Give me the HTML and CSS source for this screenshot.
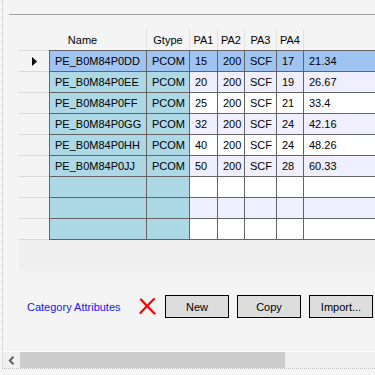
FILE: index.html
```html
<!DOCTYPE html>
<html lang="en">
<head>
    <meta charset="UTF-8">
    <meta name="viewport" content="width=device-width, initial-scale=1.0">
    <title>Category Attributes</title>
    <link rel="stylesheet" href="styles.css">
</head>
<body>
    <div class="frame">
        <div class="rule"></div>

        <div class="grid">
            <div class="grid-row grid-head">
                <div class="hcell hname">Name</div>
                <div class="hcell">Gtype</div>
                <div class="hcell">PA1</div>
                <div class="hcell">PA2</div>
                <div class="hcell">PA3</div>
                <div class="hcell">PA4</div>
                <div class="hcell hlast"></div>
            </div>

            <div class="grid-row first selected">
                <div class="rowhead">
                    <svg width="5" height="9" viewBox="0 0 5 9"><polygon points="0,0 5,4.5 0,9" fill="#000"/></svg>
                </div>
                <div class="cell key name">PE_B0M84P0DD</div>
                <div class="cell key">PCOM</div>
                <div class="cell">15</div>
                <div class="cell">200</div>
                <div class="cell">SCF</div>
                <div class="cell">17</div>
                <div class="cell">21.34</div>
            </div>
            <div class="grid-row alt">
                <div class="rowhead"></div>
                <div class="cell key name">PE_B0M84P0EE</div>
                <div class="cell key">PCOM</div>
                <div class="cell">20</div>
                <div class="cell">200</div>
                <div class="cell">SCF</div>
                <div class="cell">19</div>
                <div class="cell">26.67</div>
            </div>
            <div class="grid-row">
                <div class="rowhead"></div>
                <div class="cell key name">PE_B0M84P0FF</div>
                <div class="cell key">PCOM</div>
                <div class="cell">25</div>
                <div class="cell">200</div>
                <div class="cell">SCF</div>
                <div class="cell">21</div>
                <div class="cell">33.4</div>
            </div>
            <div class="grid-row alt">
                <div class="rowhead"></div>
                <div class="cell key name">PE_B0M84P0GG</div>
                <div class="cell key">PCOM</div>
                <div class="cell">32</div>
                <div class="cell">200</div>
                <div class="cell">SCF</div>
                <div class="cell">24</div>
                <div class="cell">42.16</div>
            </div>
            <div class="grid-row">
                <div class="rowhead"></div>
                <div class="cell key name">PE_B0M84P0HH</div>
                <div class="cell key">PCOM</div>
                <div class="cell">40</div>
                <div class="cell">200</div>
                <div class="cell">SCF</div>
                <div class="cell">24</div>
                <div class="cell">48.26</div>
            </div>
            <div class="grid-row alt">
                <div class="rowhead"></div>
                <div class="cell key name">PE_B0M84P0JJ</div>
                <div class="cell key">PCOM</div>
                <div class="cell">50</div>
                <div class="cell">200</div>
                <div class="cell">SCF</div>
                <div class="cell">28</div>
                <div class="cell">60.33</div>
            </div>
            <div class="grid-row">
                <div class="rowhead"></div>
                <div class="cell key name"></div>
                <div class="cell key"></div>
                <div class="cell"></div>
                <div class="cell"></div>
                <div class="cell"></div>
                <div class="cell"></div>
                <div class="cell"></div>
            </div>
            <div class="grid-row alt">
                <div class="rowhead"></div>
                <div class="cell key name"></div>
                <div class="cell key"></div>
                <div class="cell"></div>
                <div class="cell"></div>
                <div class="cell"></div>
                <div class="cell"></div>
                <div class="cell"></div>
            </div>
            <div class="grid-row">
                <div class="rowhead"></div>
                <div class="cell key name"></div>
                <div class="cell key"></div>
                <div class="cell"></div>
                <div class="cell"></div>
                <div class="cell"></div>
                <div class="cell"></div>
                <div class="cell"></div>
            </div>
        </div>

        <div class="actions">
            <a class="cat-link" href="#">Category Attributes</a>
            <svg class="del-icon" width="17" height="17" viewBox="0 0 17 17">
                <path d="M2 1.5 C6 6, 11 11, 15.5 15.5" stroke="#ff0000" stroke-width="2.2" fill="none" stroke-linecap="round"/>
                <path d="M15 1 C11 5, 6 10, 1.5 15" stroke="#ff0000" stroke-width="2.2" fill="none" stroke-linecap="round"/>
            </svg>
            <button type="button" class="btn">New</button>
            <button type="button" class="btn">Copy</button>
            <button type="button" class="btn">Import...</button>
        </div>

        <div class="hscroll">
            <div class="scroll-arrow">
                <svg width="7" height="9" viewBox="0 0 7 9"><path d="M5.5 0.8 L1.8 4.5 L5.5 8.2" stroke="#606060" stroke-width="2" fill="none"/></svg>
            </div>
            <div class="scroll-thumb"></div>
            <div class="scroll-track"></div>
        </div>
    </div>
</body>
</html>
```

FILE: styles.css
```css
html, body {
    margin: 0;
    overflow: hidden;
}
body {
    background: #f4f4f4;
    font-family: "Liberation Sans", Arial, sans-serif;
    font-size: 11px;
    color: #000;
}
.frame {
    width: 372px;
    height: 354px;
    margin-left: 2px;
    padding-top: 14px;
    border-left: 1px dotted #c4c4c4;
    border-bottom: 1px dotted #c4c4c4;
    overflow: hidden;
}
.rule {
    margin-left: 6px;
    height: 1px;
    background: #a0a0a0;
}

/* data grid */
.grid {
    margin-top: 14px;
    margin-left: 16px;
    height: 242px;
    background: #efefef;
    overflow: hidden;
}
.grid-row {
    display: grid;
    grid-template-columns: 30px 98px 43px 28px 27px 32px 27px 90px;
    height: 21px;
}
.grid-row.first {
    height: 22px;
}
.grid-head {
    background: #f4f4f4;
}
.hcell {
    display: flex;
    align-items: center;
    justify-content: center;
    border-right: 1px solid #e2e2e2;
    box-sizing: border-box;
}
.hname {
    grid-column: span 2;
}
.hlast {
    border-right: none;
}
.rowhead {
    background: #f4f4f4;
    border-bottom: 1px solid #dadada;
    display: flex;
    align-items: center;
    padding-left: 13px;
}
.first .rowhead {
    border-top: 1px solid #dadada;
}
.cell {
    box-sizing: border-box;
    border-right: 1px solid #646464;
    border-bottom: 1px solid #646464;
    padding-left: 5px;
    display: flex;
    align-items: center;
    background: #fff;
    white-space: nowrap;
}
.first .cell {
    border-top: 1px solid #646464;
}
.cell.name {
    border-left: 1px solid #646464;
}
.alt .cell {
    background: #efefff;
}
.cell.key,
.alt .cell.key {
    background: #add8e6;
}
.selected .cell,
.selected .cell.key {
    background: #a0c4f2;
}

/* bottom actions */
.actions {
    display: flex;
    align-items: center;
    margin-top: 24px;
    height: 23px;
}
.cat-link {
    width: 112px;
    margin-left: 24px;
    color: #1414ff;
    text-decoration: none;
}
.del-icon {
    margin-right: 9px;
}
.btn {
    width: 64px;
    height: 23px;
    margin-right: 8px;
    padding: 0;
    border: 1px solid #000;
    border-radius: 0;
    background: #dddddd;
    font-family: inherit;
    font-size: 11px;
    color: #000;
}
.btn:last-child {
    margin-right: 0;
}

/* horizontal scrollbar */
.hscroll {
    display: flex;
    margin-top: 33px;
    height: 16px;
    border-top: 1px solid #fff;
}
.scroll-arrow {
    width: 17px;
    background: #f0f0f0;
    display: flex;
    align-items: center;
    justify-content: center;
}
.scroll-thumb {
    width: 265px;
    background: #cdcdcd;
}
.scroll-track {
    flex: 1;
    background: #f0f0f0;
}
```
